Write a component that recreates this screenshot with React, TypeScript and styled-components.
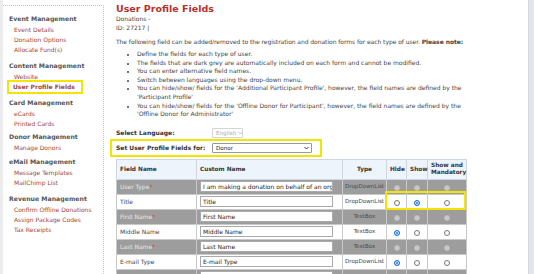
import styled, { createGlobalStyle } from 'styled-components';

const GlobalStyle = createGlobalStyle`
  html, body {
    margin: 0;
    padding: 0;
    background: #ffffff;
  }
  body {
    font-family: 'DejaVu Sans', Verdana, sans-serif;
    font-size: 6px;
    color: #333;
  }
`;

const Page = styled.div`
  width: 534px;
  height: 274px;
  display: flex;
  overflow: hidden;
  background: #ffffff;
  position: relative;
`;

const Gutter = styled.div`
  width: 3px;
  background: #ececec;
  flex-shrink: 0;
`;

const Sidebar = styled.nav`
  width: 101px;
  flex-shrink: 0;
  margin-top: 5px;
  border-top: 1px dotted #c4c4c4;
  border-right: 1px dotted #c4c4c4;
  padding: 8px 0 0 6px;
  box-sizing: border-box;
`;

const Section = styled.div<{ $after: number }>`
  margin-bottom: ${(p) => p.$after}px;
`;

const SectionTitle = styled.div`
  font-weight: bold;
  color: #555;
  font-size: 6.2px;
  line-height: 9px;
  margin-bottom: 2px;
`;

const NavLink = styled.div<{ $active?: boolean }>`
  color: #a3453a;
  font-size: 6px;
  line-height: 9.8px;
  padding-left: 5px;
  font-weight: ${(p) => (p.$active ? 'bold' : 'normal')};
  ${(p) =>
    p.$active &&
    `
    outline: 2px solid #f4e400;
    margin-right: 22px;
    padding-left: 4px;
  `}
`;

const Main = styled.main`
  flex: 1;
  padding: 3px 0 0 12px;
  min-width: 0;
`;

const TextBlock = styled.div`
  max-width: 356px;
`;

const Title = styled.h1`
  margin: 0;
  font-size: 9.5px;
  line-height: 12px;
  color: #b5312a;
  font-weight: bold;
`;

const Meta = styled.div`
  line-height: 8.5px;
  color: #444;
`;

const Intro = styled.p`
  margin: 5px 0 4px;
  line-height: 9px;
  color: #444;
  white-space: nowrap;
  letter-spacing: -0.05px;
`;

const Notes = styled.ul`
  margin: 0;
  padding-left: 21px;
  list-style: disc;
  color: #444;
  li {
    line-height: 8.6px;
  }
  li::marker {
    font-size: 5px;
  }
`;

const Form = styled.div`
  margin-top: 8px;
  display: flex;
  flex-direction: column;
  gap: 3px;
`;

const FieldRow = styled.div<{ $highlight?: boolean }>`
  display: flex;
  align-items: center;
  height: 12px;
  width: 203px;
  padding-left: ${(p) => (p.$highlight ? '3px' : '0')};
  margin-left: ${(p) => (p.$highlight ? '-3px' : '0')};
  outline: ${(p) => (p.$highlight ? '2px solid #f4e400' : 'none')};
  outline-offset: 1px;
`;

const Label = styled.span`
  width: 96px;
  flex-shrink: 0;
  font-weight: bold;
  color: #333;
`;

const Select = styled.div<{ $disabled?: boolean; $width: number }>`
  width: ${(p) => p.$width}px;
  height: 10px;
  box-sizing: border-box;
  border: 1px solid ${(p) => (p.$disabled ? '#d5d5d5' : '#999')};
  border-radius: 1px;
  display: flex;
  align-items: center;
  justify-content: space-between;
  gap: 2px;
  padding: 0 2px 0 3px;
  color: ${(p) => (p.$disabled ? '#aaa' : '#222')};
  font-size: 5.6px;
  white-space: nowrap;
`;

const Caret = styled.svg`
  width: 5px;
  height: 4px;
  flex-shrink: 0;
`;

const Table = styled.table`
  margin-top: 5px;
  border-collapse: collapse;
  width: 350px;
  table-layout: fixed;
`;

const Th = styled.th<{ $w: number; $align?: string }>`
  box-sizing: border-box;
  width: ${(p) => p.$w}px;
  height: 20px;
  background: #eef4fb;
  border: 1px solid #cfd6de;
  font-weight: bold;
  color: #333;
  text-align: ${(p) => p.$align || 'center'};
  padding: 0 3px;
  font-size: 5.8px;
  line-height: 7px;
`;

const Tr = styled.tr<{ $locked?: boolean }>`
  background: ${(p) => (p.$locked ? '#9d9d9d' : '#ffffff')};
  color: ${(p) => (p.$locked ? '#e8e8e8' : '#444')};
`;

const Td = styled.td<{ $align?: string; $muted?: boolean; $tight?: boolean }>`
  box-sizing: border-box;
  height: 15px;
  border: 1px solid #c9c9c9;
  padding: ${(p) => (p.$tight ? '0' : '0 3px')};
  text-align: ${(p) => p.$align || 'left'};
  color: ${(p) => (p.$muted ? '#4a4a4a' : 'inherit')};
  white-space: nowrap;
  overflow: hidden;
  line-height: 11px;
  font-size: ${(p) => (p.$tight ? '5.6px' : '6px')};
`;

const Star = styled.span`
  color: #e23a2a;
`;

const TextInput = styled.div`
  width: 133px;
  height: 11px;
  box-sizing: border-box;
  border: 1px solid #aaa;
  background: #fff;
  color: #222;
  padding: 0 2px;
  line-height: 9px;
  overflow: hidden;
  white-space: nowrap;
`;

const Radio = styled.span<{ $state: 'on' | 'off' | 'disabled' }>`
  display: inline-block;
  width: 6px;
  height: 6px;
  border-radius: 50%;
  box-sizing: border-box;
  vertical-align: middle;
  ${(p) =>
    p.$state === 'on'
      ? 'background: #1a73e8; border: 1px solid #1a73e8; box-shadow: inset 0 0 0 1px #fff;'
      : p.$state === 'off'
      ? 'background: #fff; border: 1px solid #777;'
      : 'background: #c9c9c9; border: 1px solid #bdbdbd;'}
`;

const Highlight = styled.div`
  position: absolute;
  left: 385px;
  top: 191px;
  width: 81px;
  height: 19px;
  border: 2px solid #f4e400;
  box-sizing: border-box;
  pointer-events: none;
`;

const ScrollEdge = styled.div`
  width: 5px;
  flex-shrink: 0;
  background: #e2e6ec;
  border-left: 1px solid #d3d8de;
`;

const nav = [
  { title: 'Event Management', after: 7, links: ['Event Details', 'Donation Options', 'Allocate Fund(s)'] },
  { title: 'Content Management', after: 6, links: ['Website', 'User Profile Fields'] },
  { title: 'Card Management', after: 3, links: ['eCards', 'Printed Cards'] },
  { title: 'Donor Management', after: 5, links: ['Manage Donors'] },
  { title: 'eMail Management', after: 6, links: ['Message Templates', 'MailChimp List'] },
  { title: 'Revenue Management', after: 0, links: ['Confirm Offline Donations', 'Assign Package Codes', 'Tax Receipts'] },
];

type State = 'on' | 'off' | 'disabled';

const rows: {
  name: string;
  required?: boolean;
  locked?: boolean;
  custom: string;
  type: string;
  radios: [State, State, State];
}[] = [
  { name: 'User Type', required: true, locked: true, custom: 'I am making a donation on behalf of an organization', type: 'DropDownList', radios: ['disabled', 'disabled', 'disabled'] },
  { name: 'Title', custom: 'Title', type: 'DropDownList', radios: ['off', 'on', 'off'] },
  { name: 'First Name', required: true, locked: true, custom: 'First Name', type: 'TextBox', radios: ['disabled', 'disabled', 'disabled'] },
  { name: 'Middle Name', custom: 'Middle Name', type: 'TextBox', radios: ['on', 'off', 'off'] },
  { name: 'Last Name', required: true, locked: true, custom: 'Last Name', type: 'TextBox', radios: ['disabled', 'disabled', 'disabled'] },
  { name: 'E-mail Type', custom: 'E-mail Type', type: 'DropDownList', radios: ['on', 'off', 'off'] },
  { name: 'E-mail', required: true, locked: true, custom: 'E-mail', type: 'TextBox', radios: ['disabled', 'disabled', 'disabled'] },
];

const notes = [
  'Define the fields for each type of user.',
  'The fields that are dark grey are automatically included on each form and cannot be modified.',
  'You can enter alternative field names.',
  'Switch between languages using the drop-down menu.',
  "You can hide/show/ fields for the 'Additional Participant Profile', however, the field names are defined by the 'Participant Profile'",
  "You can hide/show/ fields for the 'Offline Donor for Participant', however, the field names are defined by the 'Offline Donor for Administrator'",
];

function CaretIcon({ color }: { color: string }) {
  return (
    <Caret viewBox="0 0 10 8">
      <path d="M1 2 L5 6 L9 2" fill="none" stroke={color} strokeWidth="1.8" />
    </Caret>
  );
}

export default function App() {
  return (
    <>
      <GlobalStyle />
      <Page>
        <Gutter />
        <Sidebar>
          {nav.map((s) => (
            <Section key={s.title} $after={s.after}>
              <SectionTitle>{s.title}</SectionTitle>
              {s.links.map((l) => (
                <NavLink key={l} $active={l === 'User Profile Fields'}>
                  {l}
                </NavLink>
              ))}
            </Section>
          ))}
        </Sidebar>
        <Main>
          <TextBlock>
            <Title>User Profile Fields</Title>
            <Meta>Donations -</Meta>
            <Meta>ID: 27217 |</Meta>
            <Intro>
              The following field can be added/removed to the registration and donation forms for each type of user.{' '}
              <b>Please note:</b>
            </Intro>
            <Notes>
              {notes.map((n) => (
                <li key={n}>{n}</li>
              ))}
            </Notes>
          </TextBlock>
          <Form>
            <FieldRow>
              <Label>Select Language:</Label>
              <Select $disabled $width={31}>
                English <CaretIcon color="#bbb" />
              </Select>
            </FieldRow>
            <FieldRow $highlight>
              <Label>Set User Profile Fields for:</Label>
              <Select $width={100}>
                Donor <CaretIcon color="#222" />
              </Select>
            </FieldRow>
          </Form>
          <Table>
            <thead>
              <tr>
                <Th $w={80} $align="left">Field Name</Th>
                <Th $w={146} $align="left">Custom Name</Th>
                <Th $w={44}>Type</Th>
                <Th $w={20}>Hide</Th>
                <Th $w={21}>Show</Th>
                <Th $w={39}>Show and Mandatory</Th>
              </tr>
            </thead>
            <tbody>
              {rows.map((r) => (
                <Tr key={r.name} $locked={r.locked}>
                  <Td>
                    {r.name}
                    {r.required && <Star>*</Star>}
                  </Td>
                  <Td>
                    <TextInput>{r.custom}</TextInput>
                  </Td>
                  <Td $align="center" $muted={r.locked} $tight>
                    {r.type}
                  </Td>
                  {r.radios.map((st, i) => (
                    <Td key={i} $align="center">
                      <Radio $state={st} />
                    </Td>
                  ))}
                </Tr>
              ))}
            </tbody>
          </Table>
        </Main>
        <ScrollEdge />
        <Highlight />
      </Page>
    </>
  );
}
